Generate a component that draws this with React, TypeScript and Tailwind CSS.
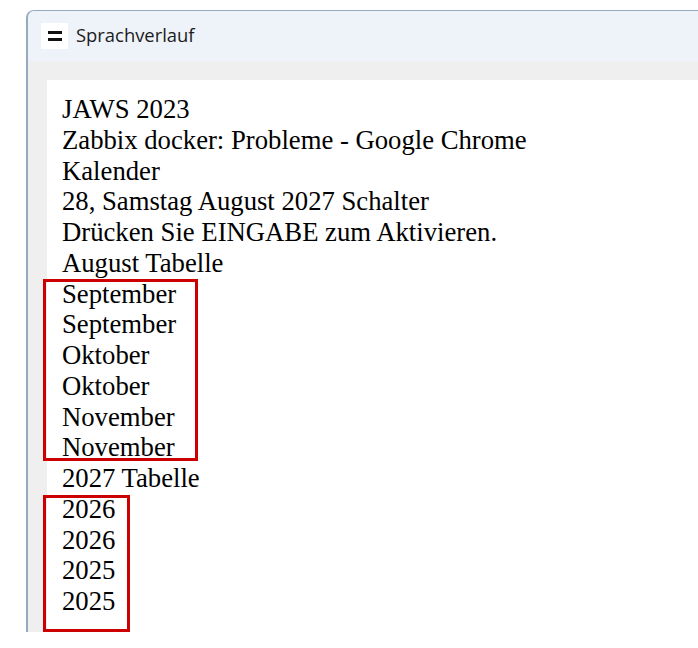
import React from "react";

const lines1 = [
  "JAWS 2023",
  "Zabbix docker: Probleme - Google Chrome",
  "Kalender",
  "28, Samstag August 2027 Schalter",
  "Drücken Sie EINGABE zum Aktivieren.",
  "August Tabelle",
];
const months = ["September", "September", "Oktober", "Oktober", "November", "November"];
const years = ["2026", "2026", "2025", "2025"];

function Line({ t }: { t: string }) {
  return <div className="whitespace-nowrap">{t}</div>;
}

export default function App() {
  return (
    <div className="w-[698px] h-[648px] bg-white overflow-hidden pt-[10px] pl-[26px]">
      <div className="h-[622px] flex flex-col border-l-2 border-t border-[#94a9c2] rounded-tl-[8px] overflow-hidden bg-[#efefef]">
        <div className="h-[50px] shrink-0 bg-[#eef3fa] flex items-center pl-[13px]">
          <div className="w-[27px] h-[26px] bg-white flex flex-col items-center justify-center gap-[4px]">
            <div className="w-[14px] h-[3px] bg-[#111111]" />
            <div className="w-[14px] h-[3px] bg-[#111111]" />
          </div>
          <div
            className="ml-[8px] text-[18.4px] text-[#1b1b1b] leading-none pb-[1px]"
            style={{ fontFamily: '"Segoe UI", "Open Sans", sans-serif' }}
          >
            Sprachverlauf
          </div>
        </div>
        <div className="flex-1 pt-[19px] pl-[19px] flex flex-col min-h-0">
          <div
            className="flex-1 bg-white pt-[14px] pl-[15px] text-[26.7px] leading-[30.75px] text-black"
            style={{ fontFamily: '"Liberation Serif", "Times New Roman", serif' }}
          >
            {lines1.map((t, i) => (
              <Line key={i} t={t} />
            ))}
            <div className="relative">
              {months.map((t, i) => (
                <Line key={i} t={t} />
              ))}
              <div className="absolute left-[-19px] top-[0px] w-[155px] h-[182px] border-[3px] border-[#cc0000]" />
            </div>
            <Line t="2027 Tabelle" />
            <div className="relative">
              {years.map((t, i) => (
                <Line key={i} t={t} />
              ))}
              <div className="absolute left-[-19px] top-[1px] w-[87px] h-[137px] border-[3px] border-[#cc0000]" />
            </div>
          </div>
        </div>
      </div>
    </div>
  );
}
